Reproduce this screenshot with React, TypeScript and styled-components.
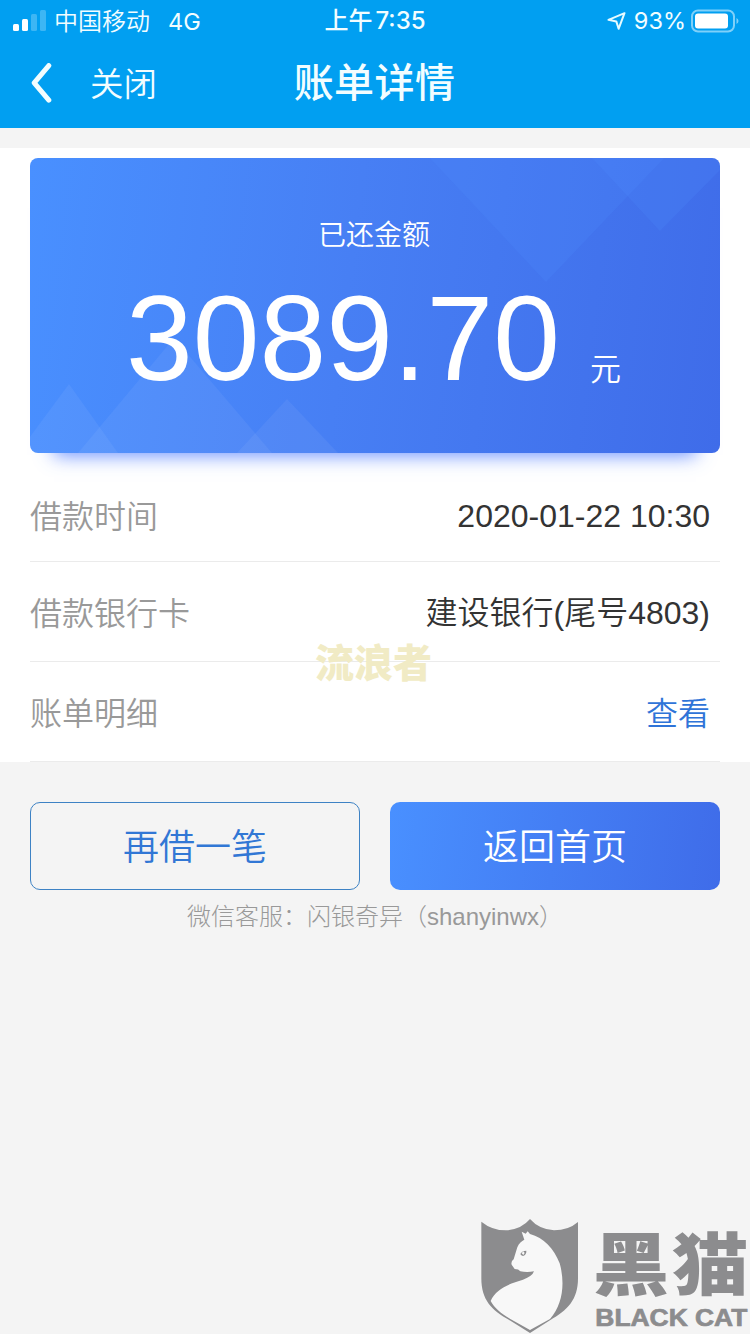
import React from "react";
import styled, { createGlobalStyle } from "styled-components";

const GlobalStyle = createGlobalStyle`
  * { box-sizing: border-box; }
  body {
    margin: 0;
    background: #f4f4f4;
    font-family: "Liberation Sans", "Noto Sans CJK SC", sans-serif;
  }
`;

const Page = styled.div`
  position: relative;
  width: 750px;
  height: 1334px;
  overflow: hidden;
  background: #f4f4f4;
`;

const Header = styled.header`
  height: 128px;
  background: #019ff1;
  color: #f2fdff;
`;

const StatusBar = styled.div`
  display: grid;
  grid-template-columns: 1fr auto 1fr;
  align-items: center;
  height: 40px;
  padding: 0 11px 0 13px;
  font: 400 24px/38px Inter, "Noto Sans CJK SC", sans-serif;
`;

const StatusGroup = styled.div<{ $end?: boolean }>`
  display: flex;
  align-items: center;
  justify-content: ${(p) => (p.$end ? "flex-end" : "flex-start")};
  white-space: nowrap;
`;

const Carrier = styled.span`
  margin: 3px 18px 0 8px;
  font-weight: 350;
`;

const Network = styled.span`
  padding-top: 2px;
  font-size: 23.5px;
  font-weight: 400;
`;

const Clock = styled.span`
  display: flex;
  gap: 3px;
  margin: 1px 2px 0 0;
  font-weight: 500;
  font-size: 24px;
`;

const Percent = styled.span`
  margin: 1px 5px 0 8px;
  font-weight: 400;
  font-size: 23.5px;
`;

const NavBar = styled.nav`
  display: grid;
  grid-template-columns: 1fr auto 1fr;
  align-items: center;
  height: 88px;
  padding: 0 32px 2px 31px;
`;

const BackGroup = styled.div`
  display: flex;
  align-items: center;
  gap: 38px;
  height: 84px;
  font-size: 33.5px;
  font-weight: 350;
  line-height: 84px;

  span {
    padding-top: 4px;
  }
`;

const Title = styled.h1`
  margin: 0;
  font-size: 40px;
  line-height: 84px;
  font-weight: 500;
  letter-spacing: 0.4px;
`;

const Panel = styled.main`
  height: 614px;
  margin-top: 20px;
  padding: 10px 30px 0;
  background: #fff;
`;

const AmountCard = styled.section`
  position: relative;
  height: 295px;
  margin-bottom: 9px;
  padding-top: 54px;
  border-radius: 8px;
  background: linear-gradient(97deg, #4990ff 0%, #477ff4 46%, #3f6ce9 100%);
  box-shadow: 0 26px 18px -24px rgba(64, 112, 255, 0.8);
  color: #fff;
  text-align: center;
`;

const Peaks = styled.svg`
  position: absolute;
  inset: 0;
  border-radius: 8px;
`;

const CardLabel = styled.div`
  position: relative;
  margin-left: -2px;
  font-size: 28px;
  line-height: 48px;
  font-weight: 350;
`;

const AmountLine = styled.div`
  position: relative;
  display: flex;
  align-items: baseline;
  justify-content: center;
  gap: 30px;
  margin: 10px 0 0 -3px;
`;

const Amount = styled.span`
  font-size: 120px;
  line-height: 136px;
`;

const Unit = styled.span`
  font-size: 31px;
  font-weight: 350;
  line-height: 40px;
`;

const Row = styled.div<{ $top: number }>`
  display: flex;
  align-items: center;
  justify-content: space-between;
  height: 100px;
  padding: ${(p) => p.$top}px 10px 0 0;
  border-bottom: 1px solid #ebebeb;
  font-size: 32px;
  line-height: 48px;
`;

const RowLabel = styled.span`
  padding-top: 2px;
  color: #999;
  font-weight: 350;
`;

const RowValue = styled.span<{ $link?: boolean }>`
  padding-top: ${(p) => (p.$link ? 2 : 0)}px;
  color: ${(p) => (p.$link ? "#2f74d8" : "#333")};
  font-weight: 350;
`;

const Actions = styled.div`
  display: grid;
  grid-template-columns: 1fr 1fr;
  gap: 30px;
  padding: 40px 30px 0;
`;

const ActionButton = styled.button<{ $primary?: boolean }>`
  height: 88px;
  padding: 0 0 4px;
  border-radius: 10px;
  border: ${(p) => (p.$primary ? "0" : "1px solid #3d82c4")};
  background: ${(p) => (p.$primary ? "linear-gradient(98deg, #4990ff, #3f6ce9)" : "transparent")};
  color: ${(p) => (p.$primary ? "#fff" : "#3177d5")};
  font-family: inherit;
  font-size: 36px;
  font-weight: 350;
`;

const Service = styled.p`
  margin: 9px 0 0;
  text-align: center;
  color: #999;
  font-size: 24px;
  line-height: 36px;
  font-weight: 300;
`;

const Watermark = styled.span`
  position: absolute;
  left: 315px;
  top: 635px;
  color: #f1ebc5;
  font-size: 39px;
  line-height: 58px;
  font-weight: 900;
`;

const BrandStamp = styled.svg`
  position: absolute;
  right: 0;
  bottom: 0;
`;

const rows = [
  { label: "借款时间", value: "2020-01-22 10:30", top: 8 },
  { label: "借款银行卡", value: "建设银行(尾号4803)", top: 3 },
  { label: "账单明细", value: "查看", top: 3, link: true },
];

export default function App() {
  return (
    <Page>
      <GlobalStyle />
      <Header>
        <StatusBar>
          <StatusGroup>
            <svg width="33" height="22" viewBox="0 0 33 22" fill="#fff">
              <rect x="0" y="14" width="6" height="7" rx="1.5" />
              <rect x="9" y="9" width="6" height="12" rx="1.5" />
              <rect x="18" y="4" width="6" height="17" rx="1.5" opacity=".24" />
              <rect x="27" y="0" width="6" height="21" rx="1.5" opacity=".24" />
            </svg>
            <Carrier>中国移动</Carrier>
            <Network>4G</Network>
          </StatusGroup>
          <Clock>
            <span>上午</span>
            <span>7:35</span>
          </Clock>
          <StatusGroup $end>
            <svg width="19" height="18" viewBox="0 0 19 18" fill="none" stroke="#e6fbff" strokeWidth="2" strokeLinejoin="round">
              <path d="M17.5 1.2 1.5 7.8 9.3 9.4 11.6 16.8Z" />
            </svg>
            <Percent>93%</Percent>
            <svg width="48" height="24" viewBox="0 0 48 24">
              <rect x="1" y="1.5" width="42" height="21" rx="6" fill="none" stroke="#7fd0f9" strokeWidth="2" />
              <rect x="4" y="4.5" width="33" height="15" rx="3" fill="#fff" />
              <path d="M45.5 9v6q2-1 2-3t-2-3" fill="#7fd0f9" />
            </svg>
          </StatusGroup>
        </StatusBar>
        <NavBar>
          <BackGroup>
            <svg width="21" height="40" viewBox="0 0 21 40" fill="none" stroke="#f2fdff" strokeWidth="5" strokeLinecap="round" strokeLinejoin="round">
              <path d="M17.8 2.6 3.2 19.8 17.8 37.2" />
            </svg>
            <span>关闭</span>
          </BackGroup>
          <Title>账单详情</Title>
        </NavBar>
      </Header>

      <Panel>
        <AmountCard>
          <Peaks width="690" height="295" viewBox="0 0 690 295">
            <g fill="#fff" fillOpacity=".055">
              <path d="M39 226-12 295H88Z" />
              <path d="M144 180 48 295H242Z" />
              <path d="M257 241 207 295H308Z" />
            </g>
            <g fill="#5090ff" fillOpacity=".19">
              <path d="M400 0H634L516 124Z" />
              <path d="M562 0H690V12L630 73Z" />
            </g>
          </Peaks>
          <CardLabel>已还金额</CardLabel>
          <AmountLine>
            <Amount>3089.70</Amount>
            <Unit>元</Unit>
          </AmountLine>
        </AmountCard>
        {rows.map((r) => (
          <Row key={r.label} $top={r.top}>
            <RowLabel>{r.label}</RowLabel>
            <RowValue $link={r.link}>{r.value}</RowValue>
          </Row>
        ))}
      </Panel>

      <Actions>
        <ActionButton>再借一笔</ActionButton>
        <ActionButton $primary>返回首页</ActionButton>
      </Actions>
      <Service>微信客服：闪银奇异（shanyinwx）</Service>

      <Watermark>流浪者</Watermark>

      <BrandStamp width="280" height="134" viewBox="0 0 840 402">
        <path
          d="M34 65Q66 91 108 91 154 88 180 57 207 88 252 91 295 91 324 66V235C324 300 292 331 240 361L180 399 119 361C65 331 34 300 34 235Z"
          fill="#8c8c8e"
        />
        <path
          d="M155 95 167 101 173 94 180 102C221 113 252 146 269 190 286 250 278 314 240 357L180 390 121 357C94 341 73 324 62 303 78 266 116 252 159 239Q187 229 192 214 171 218 151 214 146 207 134 207L125 194Q122 185 131 178 138 155 142 142C147 129 155 123 163 119Z"
          fill="#f8f8f8"
        />
        <path d="M151 162Q156 152 169 152 170 163 159 168 153 167 151 162Z" fill="#8c8c8e" />
        <path d="m160 154 4 5-4 6-5-5Z" fill="#f8f8f8" />
        <g fill="#8c8c8e" fontFamily='"Noto Sans CJK SC", sans-serif' fontWeight="900">
          <text transform="translate(368 269) scale(1.12 1)" fontSize="205">黑</text>
          <text transform="translate(606 269) scale(1.12 1)" fontSize="205">猫</text>
        </g>
        <text x="376" y="379" fill="#8c8c8e" stroke="#8c8c8e" strokeWidth="2" fontFamily='"Liberation Sans", sans-serif' fontWeight="700" fontSize="69" textLength="456" lengthAdjust="spacingAndGlyphs">
          BLACK CAT
        </text>
      </BrandStamp>
    </Page>
  );
}
